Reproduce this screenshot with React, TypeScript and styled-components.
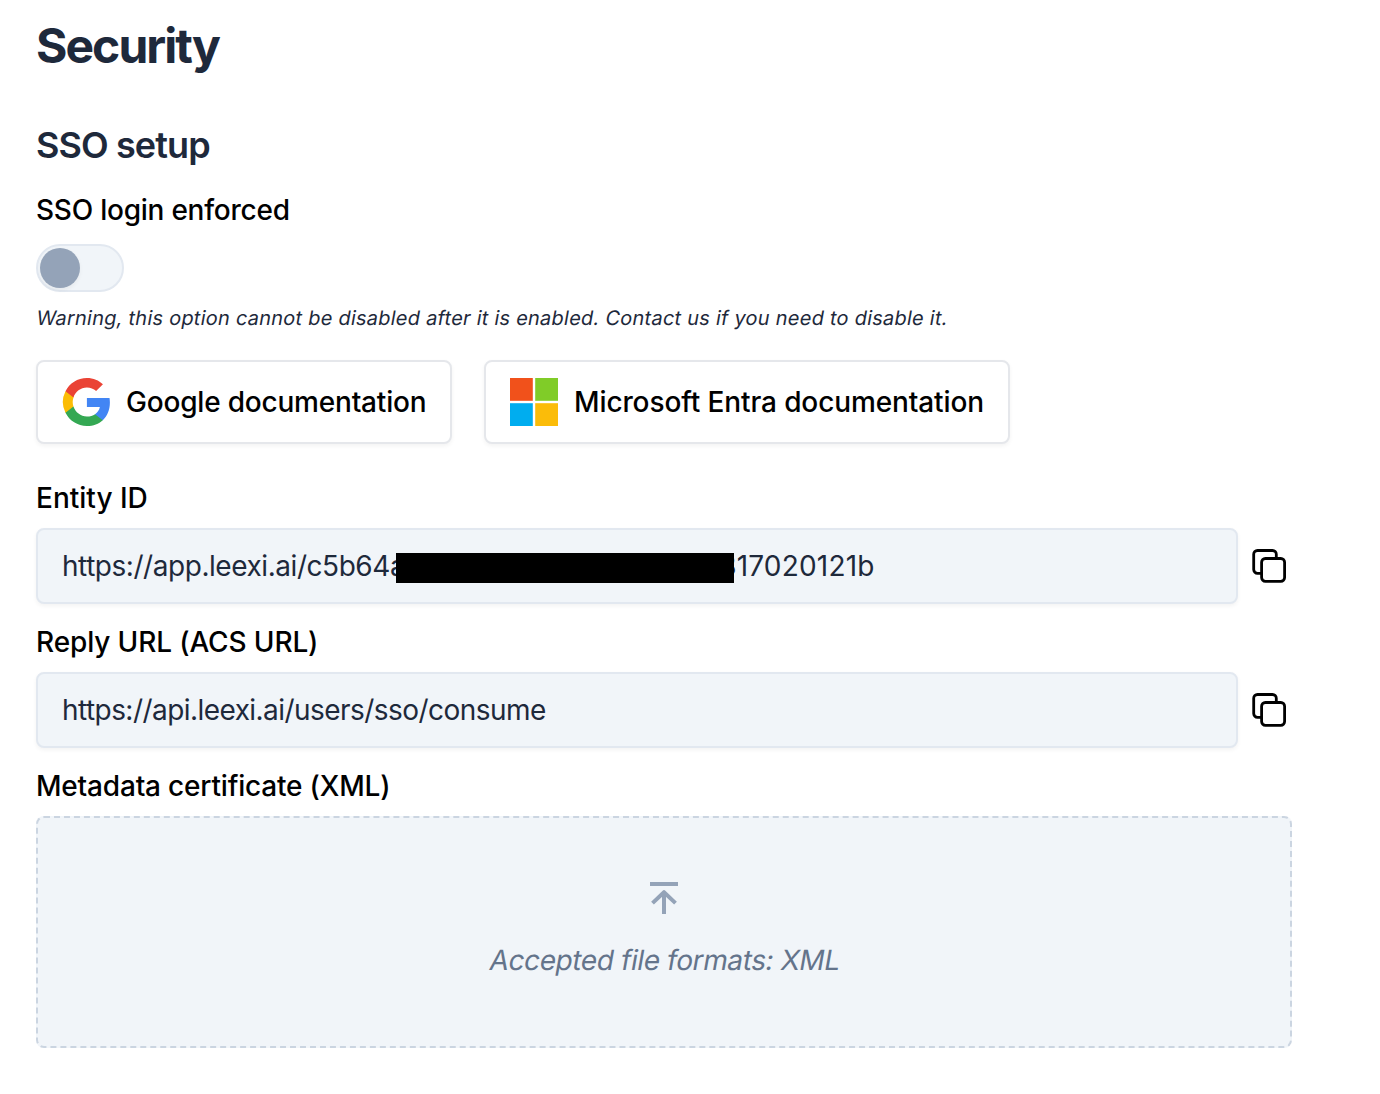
import React from "react";
import styled, { createGlobalStyle } from "styled-components";

const GlobalStyle = createGlobalStyle`
  *, *::before, *::after { box-sizing: border-box; }
  body {
    margin: 0;
    background: #ffffff;
    color: #000000;
    font-family: Inter, "Liberation Sans", sans-serif;
    -webkit-font-smoothing: antialiased;
  }
`;

const Page = styled.main`
  display: flex;
  flex-direction: column;
  width: 1292px;
  padding: 14px 0 46px 36px;
`;

const Title = styled.h1`
  margin: 0 0 39px;
  color: #1e293b;
  font-size: 48px;
  line-height: 64px;
  font-weight: 700;
  letter-spacing: -1.95px;
`;

const SectionTitle = styled.h2`
  margin: 0 0 17px;
  color: #1e293b;
  font-size: 36px;
  line-height: 56px;
  font-weight: 600;
  letter-spacing: -0.9px;
`;

const Label = styled.div<{ $gap?: number; $tracking?: number }>`
  margin-bottom: ${(p) => p.$gap ?? 10}px;
  font-size: 28px;
  line-height: 40px;
  font-weight: 500;
  letter-spacing: ${(p) => p.$tracking ?? 0}px;
`;

const Toggle = styled.button`
  display: flex;
  align-items: center;
  width: 88px;
  height: 48px;
  padding: 0 2px;
  border: 2px solid #e2e8f0;
  border-radius: 24px;
  background: #f1f5f9;
`;

const Knob = styled.span`
  width: 40px;
  height: 40px;
  border-radius: 50%;
  background: #94a3b8;
  box-shadow: 0 2px 4px rgba(0, 0, 0, 0.05);
`;

const Oblique = styled.span<{ $tracking: number }>`
  display: inline-block;
  letter-spacing: ${(p) => p.$tracking}px;
  white-space: nowrap;
  transform: skewX(-10deg);
  transform-origin: 0 65%;
`;

const Warning = styled.p`
  margin: 12px 0 28px;
  color: #1e293b;
  font-size: 20px;
  line-height: 28px;
`;

const DocLinks = styled.div`
  display: flex;
  gap: 32px;
  margin-bottom: 34px;
`;

const DocLink = styled.a<{ $width: number; $tracking: number }>`
  display: flex;
  align-items: center;
  gap: 16px;
  width: ${(p) => p.$width}px;
  height: 84px;
  padding: 0 24px;
  border: 2px solid #e5e7eb;
  border-radius: 8px;
  background: #ffffff;
  box-shadow: 0 2px 4px rgba(0, 0, 0, 0.05);
  font-size: 28px;
  line-height: 40px;
  font-weight: 500;
  letter-spacing: ${(p) => p.$tracking}px;
  white-space: nowrap;
  svg { flex: none; }
`;

const FieldRow = styled.div`
  display: flex;
  align-items: center;
  gap: 14px;
  margin-bottom: 18px;
`;

const Field = styled.div`
  display: flex;
  flex: 1;
  align-items: center;
  height: 76px;
  padding: 0 24px;
  border: 2px solid #e2e8f0;
  border-radius: 8px;
  background: #f1f5f9;
  box-shadow: 0 2px 4px rgba(0, 0, 0, 0.05);
  color: #1e293b;
  font-size: 28px;
  line-height: 40px;
  white-space: nowrap;
`;

const Value = styled.span<{ $tracking: number }>`
  letter-spacing: ${(p) => p.$tracking}px;
`;

const Redaction = styled.span`
  position: relative;
  z-index: 1;
  flex: none;
  width: 338px;
  height: 30px;
  margin: 4px -15px 0 -9px;
  background: #000000;
`;

const CopyButton = styled.button`
  display: flex;
  padding: 0;
  border: 0;
  background: none;
  color: #000000;
`;

const DropZone = styled.div`
  display: flex;
  flex-direction: column;
  align-items: center;
  height: 232px;
  padding-top: 56px;
  border: 2px dashed #cbd5e1;
  border-radius: 8px;
  background: #f1f5f9;
  color: #64748b;
  font-size: 28px;
  line-height: 40px;
`;

const UploadMark = styled.svg`
  margin-bottom: 18px;
  color: #94a3b8;
`;

const GoogleLogo = () => (
  <svg width="48" height="48" viewBox="-0.2 0 24 24">
    <path fill="#4285F4" d="M23.745 12.27c0-.79-.07-1.54-.19-2.27h-11.3v4.51h6.47c-.29 1.48-1.14 2.73-2.4 3.58v3h3.86c2.26-2.09 3.56-5.17 3.56-8.82z" />
    <path fill="#34A853" d="M12.255 24c3.24 0 5.95-1.08 7.93-2.91l-3.86-3c-1.08.72-2.45 1.16-4.07 1.16-3.13 0-5.78-2.11-6.73-4.96h-3.98v3.09C3.515 21.3 7.565 24 12.255 24z" />
    <path fill="#FBBC05" d="M5.525 14.29c-.25-.72-.38-1.49-.38-2.29s.14-1.57.38-2.29V6.62h-3.98a11.86 11.86 0 0 0 0 10.76l3.98-3.09z" />
    <path fill="#EA4335" d="M12.255 4.75c1.77 0 3.35.61 4.6 1.8l3.42-3.42C18.205 1.19 15.495 0 12.255 0c-4.69 0-8.74 2.7-10.71 6.62l3.98 3.09c.95-2.85 3.6-4.96 6.73-4.96z" />
  </svg>
);

const MicrosoftLogo = () => (
  <svg width="48" height="48" viewBox="0 0 48 48">
    <path fill="#F1511B" d="M0 0h22.8v22.8H0z" />
    <path fill="#80CC28" d="M25.2 0H48v22.8H25.2z" />
    <path fill="#00ADEF" d="M0 25.2h22.8V48H0z" />
    <path fill="#FBBC09" d="M25.2 25.2H48V48H25.2z" />
  </svg>
);

const CopyIcon = () => (
  <svg width="40" height="40" viewBox="0 0 40 40" fill="none" stroke="currentColor" strokeWidth="2.8" strokeLinecap="round" strokeLinejoin="round">
    <rect x="9.6" y="12.5" width="23" height="22.9" rx="3.8" />
    <path d="M9.6 27.4H5.5a3.8 3.8 0 0 1-3.8-3.8V8.3a3.8 3.8 0 0 1 3.8-3.8h15a3.8 3.8 0 0 1 3.8 3.8v4.2" />
  </svg>
);

const UploadIcon = () => (
  <UploadMark width="48" height="48" viewBox="0 0 48 48" fill="none" stroke="currentColor" strokeWidth="4">
    <path d="M10 10h28M24 40V19" />
    <path d="M12.5 29.1 24 18.2l11.5 10.9" strokeLinejoin="round" />
  </UploadMark>
);

export default function App() {
  return (
    <>
      <GlobalStyle />
      <Page>
        <Title>Security</Title>
        <SectionTitle>SSO setup</SectionTitle>
        <Label $gap={14} $tracking={-0.24}>SSO login enforced</Label>
        <Toggle role="switch" aria-checked="false">
          <Knob />
        </Toggle>
        <Warning>
          <Oblique $tracking={0.24}>
            Warning, this option cannot be disabled after it is enabled. Contact us if you need to disable it.
          </Oblique>
        </Warning>
        <DocLinks>
          <DocLink $width={416} $tracking={-0.2}>
            <GoogleLogo />
            Google documentation
          </DocLink>
          <DocLink $width={526} $tracking={-0.11}>
            <MicrosoftLogo />
            Microsoft Entra documentation
          </DocLink>
        </DocLinks>
        <Label>Entity ID</Label>
        <FieldRow>
          <Field>
            <Value $tracking={-0.45}>https://app.leexi.ai/c5b64a</Value>
            <Redaction />
            <Value $tracking={0.2}>317020121b</Value>
          </Field>
          <CopyButton>
            <CopyIcon />
          </CopyButton>
        </FieldRow>
        <Label $tracking={-0.13}>Reply URL (ACS URL)</Label>
        <FieldRow>
          <Field>
            <Value $tracking={-0.55}>https://api.leexi.ai/users/sso/consume</Value>
          </Field>
          <CopyButton>
            <CopyIcon />
          </CopyButton>
        </FieldRow>
        <Label $tracking={-0.19}>Metadata certificate (XML)</Label>
        <DropZone>
          <UploadIcon />
          <Oblique $tracking={-0.4}>Accepted file formats: XML</Oblique>
        </DropZone>
      </Page>
    </>
  );
}
